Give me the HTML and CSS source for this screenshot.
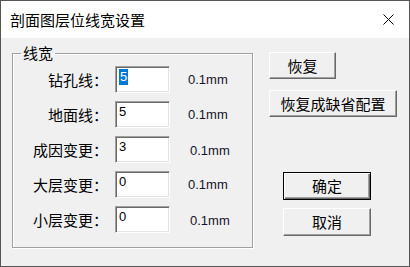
FILE: index.html
```html
<!DOCTYPE html>
<html>
<head>
	<meta charset="utf-8">
	<title>剖面图层位线宽设置</title>
	<link rel="stylesheet" href="styles.css">
</head>
<body>
	<div class="window">
		<div class="titlebar">
			<span class="title">剖面图层位线宽设置</span>
			<svg class="close" width="11" height="11" viewBox="0 0 11 11">
				<path d="M0.5 0.5 L10.5 10.5 M10.5 0.5 L0.5 10.5" stroke="#000" stroke-width="1" fill="none"/>
			</svg>
		</div>
		<div class="client">
			<fieldset class="group">
				<legend>线宽</legend>
				<div class="row">
					<label class="lbl">钻孔线：</label>
					<span class="num"><span class="sel">5</span></span>
					<span class="unit">0.1mm</span>
				</div>
				<div class="row">
					<label class="lbl">地面线：</label>
					<span class="num">5</span>
					<span class="unit">0.1mm</span>
				</div>
				<div class="row">
					<label class="lbl">成因变更：</label>
					<span class="num">3</span>
					<span class="unit shift">0.1mm</span>
				</div>
				<div class="row">
					<label class="lbl">大层变更：</label>
					<span class="num">0</span>
					<span class="unit">0.1mm</span>
				</div>
				<div class="row">
					<label class="lbl">小层变更：</label>
					<span class="num">0</span>
					<span class="unit shift">0.1mm</span>
				</div>
			</fieldset>
			<div class="actions">
				<button type="button" class="btn btn-small">恢复</button>
				<button type="button" class="btn btn-wide">恢复成缺省配置</button>
				<button type="button" class="btn btn-ok">确定</button>
				<button type="button" class="btn btn-cancel">取消</button>
			</div>
		</div>
	</div>
</body>
</html>
```

FILE: styles.css
```css
body {
	margin: 0;
	font-family: "Noto Sans CJK SC", sans-serif;
	color: #000;
}
.window {
	width: 410px;
	height: 267px;
	box-sizing: border-box;
	border: 1px solid #555;
	background: #f0f0f0;
}
.titlebar {
	height: 37px;
	background: #fff;
	display: flex;
	align-items: center;
	justify-content: space-between;
	padding: 0 15px 0 9px;
}
.title {
	font-size: 15px;
	line-height: 16px;
}
.client {
	display: flex;
	align-items: flex-start;
	gap: 16px;
	padding: 7px 0 0 11px;
}
.group {
	margin: 0;
	width: 241px;
	box-sizing: border-box;
	padding: 5px 0 14px 0;
	border: 1px solid #a0a0a0;
	box-shadow: 1px 1px 0 #fff, inset 1px 1px 0 #fff;
}
.group legend {
	margin-left: 8px;
	padding: 0 2px;
	font-size: 15px;
	line-height: 16px;
}
.row {
	display: flex;
	align-items: center;
	height: 27px;
	margin-bottom: 8px;
}
.row:last-child {
	margin-bottom: 0;
}
.lbl {
	width: 95px;
	margin-right: 7px;
	text-align: right;
	font-size: 15px;
	line-height: 16px;
}
.num {
	display: block;
	width: 55px;
	height: 27px;
	box-sizing: border-box;
	padding: 2px 2px 0 3px;
	border: 1px solid;
	border-color: #a0a0a0 #fff #fff #a0a0a0;
	box-shadow: inset 1px 1px 0 #696969, inset -1px -1px 0 #e3e3e3;
	background: #fff;
	font-family: "Liberation Sans", sans-serif;
	font-size: 13px;
	line-height: 16px;
	color: #000;
}
.sel {
	display: inline-block;
	padding: 0 1px;
	background: #0078d7;
	color: #fff;
}
.unit {
	margin-left: 18px;
	font-family: "Liberation Sans", sans-serif;
	font-size: 13px;
	color: #14142c;
}
.unit.shift {
	margin-left: 20px;
	margin-top: 2px;
}
.actions {
	display: flex;
	flex-direction: column;
	align-items: flex-start;
	margin-top: 7px;
}
.btn {
	height: 27px;
	box-sizing: border-box;
	margin: 0;
	padding: 0;
	background: #f0f0f0;
	border: 1px solid;
	border-color: #fff #696969 #696969 #fff;
	box-shadow: inset -1px -1px 0 #a0a0a0;
	font-family: "Noto Sans CJK SC", sans-serif;
	font-size: 15px;
	line-height: 16px;
	color: #000;
}
.btn-small {
	width: 67px;
}
.btn-wide {
	width: 128px;
	margin-top: 11px;
}
.btn-ok {
	width: 88px;
	height: 28px;
	margin: 55px 0 0 14px;
	border-color: #000;
	box-shadow: inset 1px 1px 0 #fff, inset -1px -1px 0 #696969, inset -2px -2px 0 #a0a0a0;
}
.btn-cancel {
	width: 88px;
	height: 28px;
	margin: 8px 0 0 14px;
}
```
